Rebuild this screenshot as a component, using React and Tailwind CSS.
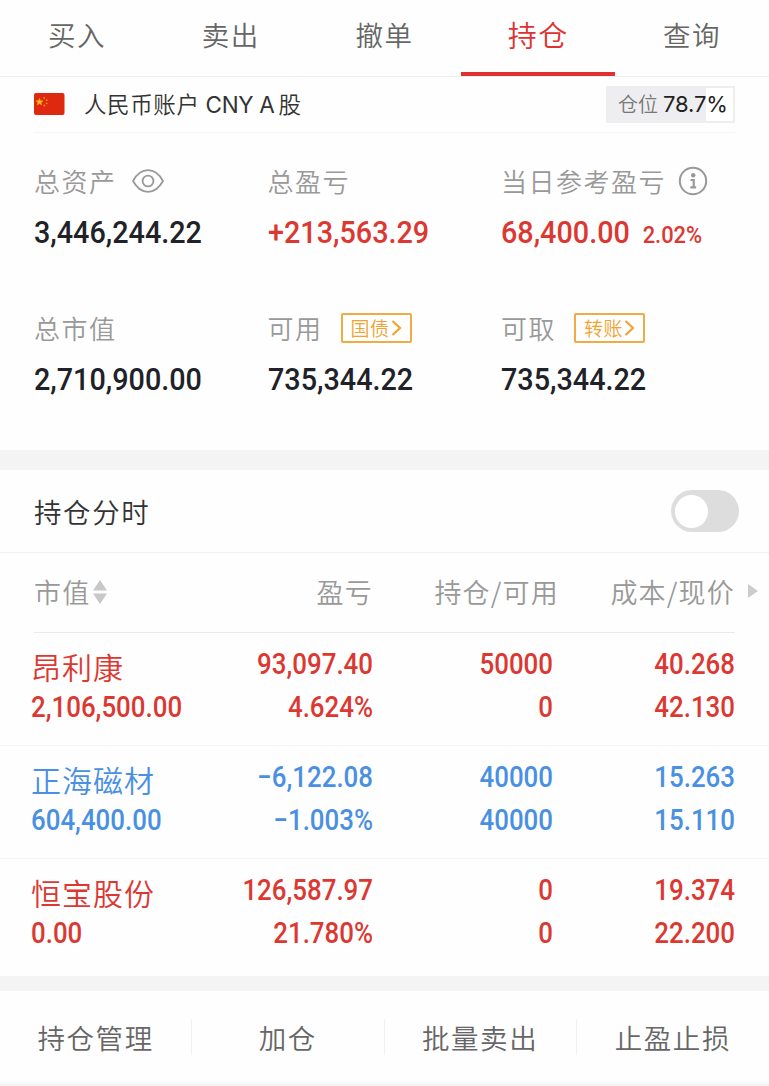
import { useState } from 'react'

const TABS = ['买入', '卖出', '撤单', '持仓', '查询']
const ACTIONS = ['持仓管理', '加仓', '批量卖出', '止盈止损']

const HOLDINGS = [
  {
    name: '昂利康', value: '2,106,500.00', profit: '93,097.40', rate: '4.624%',
    held: '50000', usable: '0', cost: '40.268', price: '42.130', up: true,
  },
  {
    name: '正海磁材', value: '604,400.00', profit: '−6,122.08', rate: '−1.003%',
    held: '40000', usable: '40000', cost: '15.263', price: '15.110', up: false,
  },
  {
    name: '恒宝股份', value: '0.00', profit: '126,587.97', rate: '21.780%',
    held: '0', usable: '0', cost: '19.374', price: '22.200', up: true,
  },
]

function Flag() {
  return (
    <svg width="31" height="22" viewBox="0 0 31 22">
      <rect width="30.500" height="22" rx="2" fill="#de2910" />
      <path d="M5.500 5.400l1 2.300 2.500.2-1.900 1.600.6 2.400-2.200-1.300-2.200 1.300.6-2.400L2 7.900l2.500-.2z" fill="#fcc419" stroke="#f08a1c" strokeWidth=".8" />
      <circle cx="10.200" cy="5" r=".9" fill="#f08a1c" />
      <circle cx="12.700" cy="7.200" r=".9" fill="#f08a1c" />
      <circle cx="12.700" cy="10.300" r=".9" fill="#f08a1c" />
      <circle cx="10.400" cy="12.500" r=".9" fill="#f08a1c" />
    </svg>
  )
}

function EyeIcon() {
  return (
    <svg width="34" height="26" viewBox="0 0 34 26" fill="none" stroke="#999" strokeWidth="1.800">
      <path d="M2 13C6 5.800 11 2.200 17 2.200S28 5.800 32 13c-4 7.200-9 10.800-15 10.800S6 20.200 2 13z" strokeLinejoin="round" />
      <circle cx="17" cy="13" r="5.400" />
    </svg>
  )
}

function InfoIcon() {
  return (
    <svg width="30" height="30" viewBox="0 0 30 30" fill="none">
      <circle cx="15" cy="15" r="13.200" stroke="#999" strokeWidth="2" />
      <circle cx="15.200" cy="9.200" r="2.200" fill="#999" />
      <path d="M12.500 14h3.200v7.200M12.300 21.300h5.800" stroke="#999" strokeWidth="2.200" />
    </svg>
  )
}

function Tag({ children }) {
  return (
    <button className="ml-[18px] flex h-[30px] w-[71px] items-center justify-center gap-px rounded-[2px] border-2 border-[#f0ab43] text-[19px] leading-[26px] tracking-[0.5px] text-[#f0a430]">
      {children}
      <svg width="11" height="18" viewBox="0 0 11 18" fill="none" stroke="#f0a430" strokeWidth="2.200">
        <path d="M1.500 2l7.500 7-7.500 7" />
      </svg>
    </button>
  )
}

function Stat({ label, extra, children }) {
  return (
    <div>
      <div className="flex h-[36px] items-center text-[26px] leading-[36px] tracking-[1.500px] whitespace-nowrap text-[#999]">
        {label}
        {extra}
      </div>
      <div className="mt-[15px] h-[36px] whitespace-nowrap text-[#1f2228]">{children}</div>
    </div>
  )
}

function BigNum({ children, className = '' }) {
  return (
    <span className={`inline-block origin-left scale-x-[0.913] font-[Roboto] text-[31.500px] leading-[37px] font-medium ${className}`}>
      {children}
    </span>
  )
}

function Pair({ top, bottom }) {
  return (
    <div className="origin-right scale-x-[0.892] pt-[10px] text-right font-[Roboto] text-[29px] leading-[43px] font-medium">
      <div>{top}</div>
      <div>{bottom}</div>
    </div>
  )
}

export default function App() {
  const [tab, setTab] = useState('持仓')
  const [intraday, setIntraday] = useState(false)

  return (
    <div className="h-[1086px] w-full overflow-hidden bg-[#fefefe] font-['Noto_Sans_CJK_SC',sans-serif] font-[350] text-[#333]">
      <nav className="grid h-[77px] grid-cols-5 border-b border-[#eee]">
        {TABS.map(t => (
          <button
            key={t}
            onClick={() => setTab(t)}
            className={`border-b-4 pb-[2px] tracking-[1.500px] ${t === tab ? 'border-[#e03131] text-[29px] text-[#e03131]' : 'border-transparent text-[27.500px] text-[#666]'}`}
          >
            {t}
          </button>
        ))}
      </nav>

      <div className="mx-[34px] flex h-[56px] items-center border-b border-[#f6f6f6] pb-px">
        <Flag />
        <span className="ml-[19px] text-[22.500px] leading-[32px] tracking-[0.600px]">
          人民币账户<span className="mr-[4px] font-[Inter] font-normal tracking-[-0.300px]"> CNY A</span>股
        </span>
        <div className="ml-auto flex h-[37px] w-[129px] items-center border-2 border-[#eeeef1] bg-linear-to-r from-[#eeeef1] from-[78.700%] to-white to-[78.700%] pl-[10px] whitespace-nowrap">
          <span className="text-[20px] text-[#777]">仓位</span>
          <span className="ml-[5px] font-[Inter] text-[22px] font-normal tracking-[-0.100px] text-[#222]">78.7%</span>
        </div>
      </div>

      <section className="grid h-[317px] grid-cols-[233.500px_233.500px_1fr] grid-rows-[147px_1fr] pt-[30px] pl-[34px]">
        <Stat label="总资产" extra={<span className="ml-[14px]"><EyeIcon /></span>}>
          <BigNum>3,446,244.22</BigNum>
        </Stat>
        <Stat label="总盈亏">
          <BigNum className="text-[#dc3832]">+213,563.29</BigNum>
        </Stat>
        <Stat label="当日参考盈亏" extra={<span className="ml-[12px]"><InfoIcon /></span>}>
          <BigNum className="text-[#dc3832]">
            68,400.00<span className="ml-[14px] text-[24px]">2.02%</span>
          </BigNum>
        </Stat>
        <Stat label="总市值">
          <BigNum>2,710,900.00</BigNum>
        </Stat>
        <Stat label="可用" extra={<Tag>国债</Tag>}>
          <BigNum>735,344.22</BigNum>
        </Stat>
        <Stat label="可取" extra={<Tag>转账</Tag>}>
          <BigNum>735,344.22</BigNum>
        </Stat>
      </section>

      <div className="h-[20px] bg-[#f4f4f4]" />

      <div className="flex h-[83px] items-center justify-between border-b border-[#f0f0f0] pr-[30px] pl-[34px]">
        <span className="pt-px text-[27.500px] tracking-[1.600px]">持仓分时</span>
        <button
          onClick={() => setIntraday(!intraday)}
          className={`flex h-[42px] w-[68px] items-center rounded-full px-[4px] ${intraday ? 'justify-end bg-[#e03131]' : 'bg-[#ddd]'}`}
        >
          <span className="size-[33px] rounded-full bg-white" />
        </button>
      </div>

      <div className="grid h-[79px] grid-cols-[150px_189px_186px_176px_1fr] items-center pl-[34px] text-right text-[27px] tracking-[1.200px] whitespace-nowrap text-[#999]">
        <div className="flex items-center">
          市值
          <svg width="14" height="24" viewBox="0 0 14 24" fill="#c8c8c8" className="mb-[2px] ml-[3px]">
            <path d="M7 0l7 10.500H0zM0 13.500h14L7 24z" />
          </svg>
        </div>
        <div>盈亏</div>
        <div>持仓/可用</div>
        <div>成本/现价</div>
        <svg width="10" height="14" viewBox="0 0 10 14" fill="#ccc" className="mb-[3px] ml-[13px]">
          <path d="M0 0l10 7-10 7z" />
        </svg>
      </div>
      <div className="mx-[34px] h-px bg-[#e9e9e9]" />

      <div className="h-[343px]">
        {HOLDINGS.map(h => (
          <div
            key={h.name}
            className={`grid h-[113px] grid-cols-[182px_160px_180px_182px] border-b border-[#f5f5f5] pl-[31px] last:border-0 ${h.up ? 'text-[#dc3832]' : 'text-[#4a90e2]'}`}
          >
            <div className="pt-[13px] whitespace-nowrap">
              <div className="text-[30px] leading-[40px] tracking-[1px]">{h.name}</div>
              <div className="origin-left scale-x-[0.892] font-[Roboto] text-[29px] leading-[43px] font-medium">{h.value}</div>
            </div>
            <Pair top={h.profit} bottom={h.rate} />
            <Pair top={h.held} bottom={h.usable} />
            <Pair top={h.cost} bottom={h.price} />
          </div>
        ))}
      </div>

      <div className="h-[15px] bg-[#f4f4f4]" />
      <footer className="grid h-[95px] grid-cols-4 items-center border-b-3 border-[#f4f4f4]">
        {ACTIONS.map(a => (
          <button key={a} className="h-[36px] border-r border-[#f0f0f0] text-[27.500px] leading-[36px] tracking-[1.600px] text-[#666] last:border-0">
            {a}
          </button>
        ))}
      </footer>
    </div>
  )
}
